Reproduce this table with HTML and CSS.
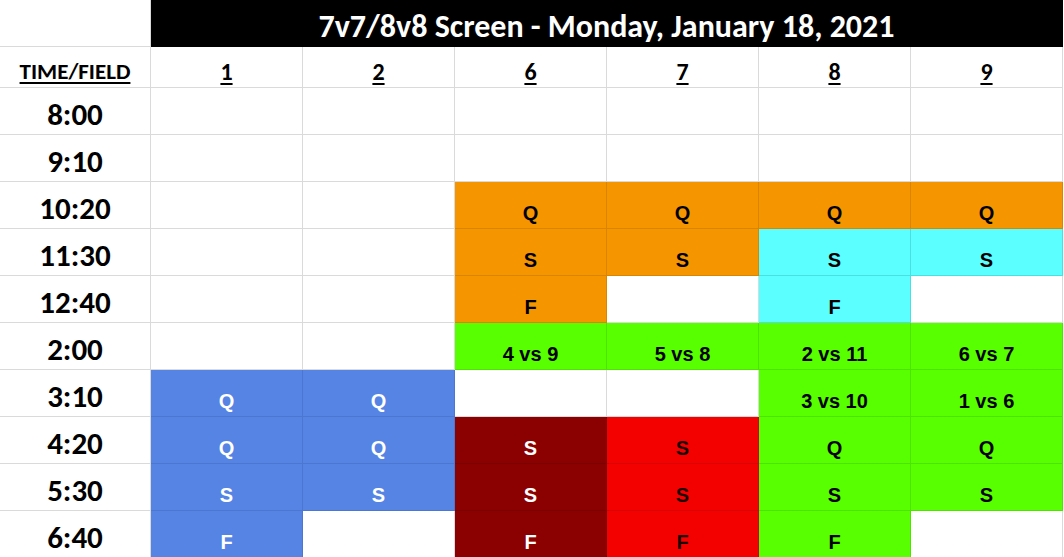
FILE: index.html
```html
<!DOCTYPE html>
<html>
<head>
<meta charset="utf-8">
<link rel="stylesheet" href="styles.css">
</head>
<body>
<div class="sheet">
  <div class="cell corner"></div>
  <div class="cell title">7v7/8v8 Screen - Monday, January 18, 2021</div>

  <div class="cell head first"><span>TIME/FIELD</span></div>
  <div class="cell head"><span>1</span></div>
  <div class="cell head"><span>2</span></div>
  <div class="cell head"><span>6</span></div>
  <div class="cell head"><span>7</span></div>
  <div class="cell head"><span>8</span></div>
  <div class="cell head"><span>9</span></div>

  <div class="cell time">8:00</div>
  <div class="cell"></div><div class="cell"></div><div class="cell"></div><div class="cell"></div><div class="cell"></div><div class="cell"></div>

  <div class="cell time">9:10</div>
  <div class="cell"></div><div class="cell"></div><div class="cell"></div><div class="cell"></div><div class="cell"></div><div class="cell"></div>

  <div class="cell time">10:20</div>
  <div class="cell"></div><div class="cell"></div>
  <div class="cell orange">Q</div><div class="cell orange">Q</div><div class="cell orange">Q</div><div class="cell orange">Q</div>

  <div class="cell time">11:30</div>
  <div class="cell"></div><div class="cell"></div>
  <div class="cell orange">S</div><div class="cell orange">S</div><div class="cell cyan">S</div><div class="cell cyan">S</div>

  <div class="cell time">12:40</div>
  <div class="cell"></div><div class="cell"></div>
  <div class="cell orange">F</div><div class="cell"></div><div class="cell cyan">F</div><div class="cell"></div>

  <div class="cell time">2:00</div>
  <div class="cell"></div><div class="cell"></div>
  <div class="cell green">4 vs 9</div><div class="cell green">5 vs 8</div><div class="cell green">2 vs 11</div><div class="cell green">6 vs 7</div>

  <div class="cell time">3:10</div>
  <div class="cell blue">Q</div><div class="cell blue">Q</div>
  <div class="cell"></div><div class="cell"></div><div class="cell green">3 vs 10</div><div class="cell green">1 vs 6</div>

  <div class="cell time">4:20</div>
  <div class="cell blue">Q</div><div class="cell blue">Q</div>
  <div class="cell maroon">S</div><div class="cell red">S</div><div class="cell green">Q</div><div class="cell green">Q</div>

  <div class="cell time">5:30</div>
  <div class="cell blue">S</div><div class="cell blue">S</div>
  <div class="cell maroon">S</div><div class="cell red">S</div><div class="cell green">S</div><div class="cell green">S</div>

  <div class="cell time">6:40</div>
  <div class="cell blue">F</div><div class="cell"></div>
  <div class="cell maroon">F</div><div class="cell red">F</div><div class="cell green">F</div><div class="cell"></div>
</div>
</body>
</html>
```

FILE: styles.css
```css
html, body {
  margin: 0;
  padding: 0;
  background: #ffffff;
}

.sheet {
  display: grid;
  grid-template-columns: 151px repeat(6, 152px);
  grid-template-rows: 47px 41px repeat(10, 47px);
  width: 1064px;
  font-family: "Liberation Sans", Arial, sans-serif;
}

.cell {
  box-sizing: border-box;
  border-right: 1px solid #dadada;
  border-bottom: 1px solid #dadada;
  display: flex;
  justify-content: center;
  align-items: flex-end;
  padding-bottom: 3px;
  font-weight: bold;
  font-size: 20px;
  color: #000;
}

.corner {
  background: #fff;
}

.title {
  grid-column: 2 / span 6;
  background: #000;
  color: #fff;
  border-color: #000;
  font-family: Carlito, Lato, "Open Sans", sans-serif;
  font-size: 32px;
  padding-bottom: 0;
}

.head {
  font-family: Carlito, Lato, "Open Sans", sans-serif;
  font-size: 24px;
  padding-bottom: 1px;
}

.head span {
  text-decoration: underline;
  text-decoration-thickness: 2px;
  text-underline-offset: 3px;
}

.head.first {
  font-size: 23px;
  padding-bottom: 2px;
}

.time {
  font-family: Carlito, Lato, "Open Sans", sans-serif;
  font-size: 31px;
  padding-bottom: 1px;
}

.orange { background: #f59500; border-color: #d98500; }
.cyan   { background: #5cffff; border-color: #4ae0e0; }
.green  { background: #58ff00; border-color: #4ee400; }
.blue   { background: #5584e4; border-color: #4c77cf; color: #fff; }
.maroon { background: #8b0000; border-color: #7a0000; color: #fff; }
.red    { background: #f30000; border-color: #d80000; color: #1a0000; }
```
